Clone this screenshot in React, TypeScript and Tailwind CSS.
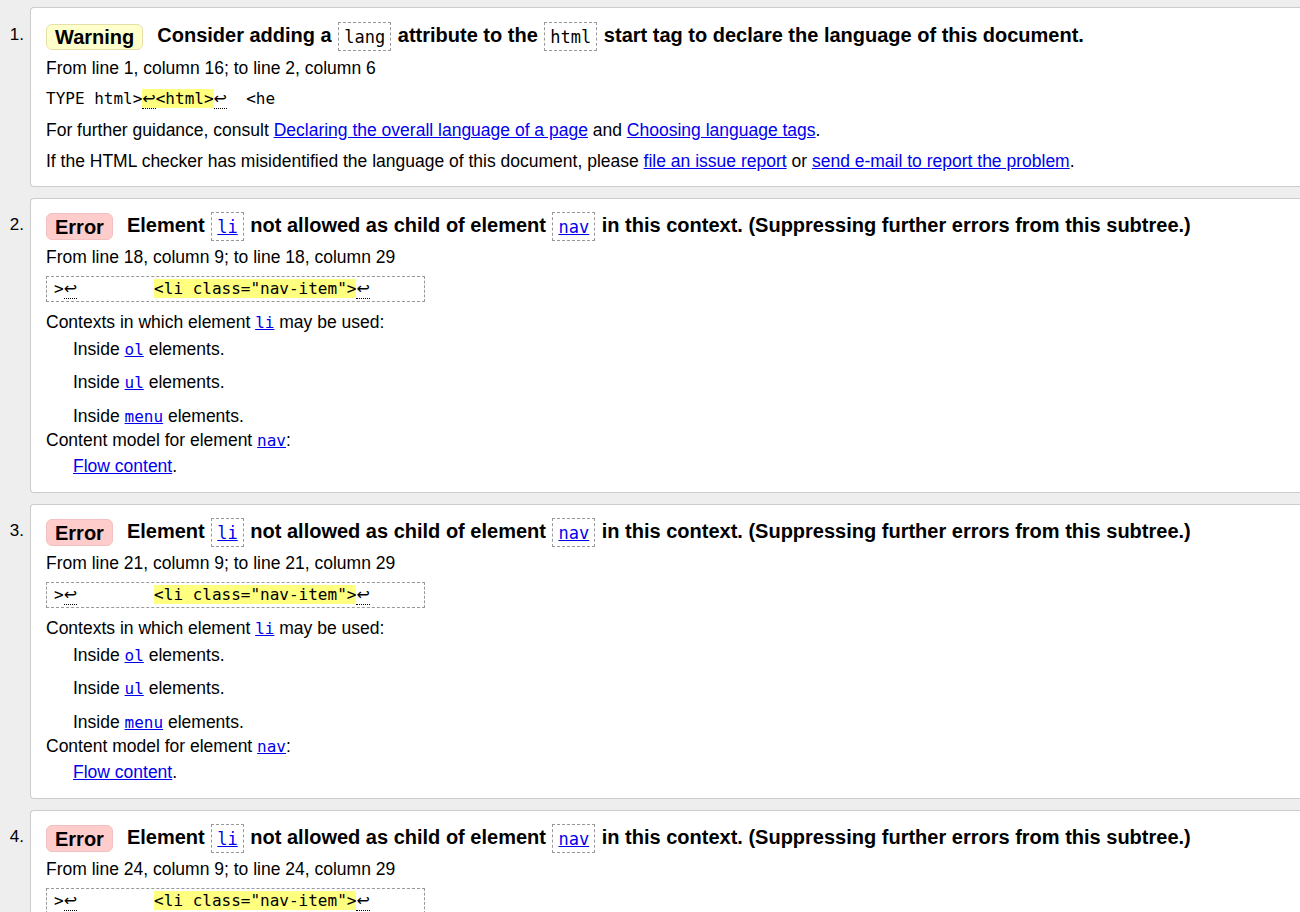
import React from "react";

type Kind = "warning" | "error";

const sans = "font-['Liberation_Sans',Arial,sans-serif]";
const mono = "font-['DejaVu_Sans_Mono','Liberation_Mono',monospace]";

/**
 * Inline code in a message title, with a dashed box round it.
 */
const TitleCode = ({ children, link }: { children: string; link?: boolean }) => (
  <span className="mx-[1px] inline-flex h-[29px] items-center border border-dashed border-[#999] px-[5px] align-middle">
    <code
      className={`${mono} text-[17px] font-normal ${
        link ? "text-[#0000ee] underline" : "text-black"
      }`}
    >
      {children}
    </code>
  </span>
);

/**
 * Inline link to an element name, in body text.
 */
const CodeLink = ({ children }: { children: string }) => (
  <a href="#" className={`${mono} text-[16px] text-[#0000ee] underline`}>
    {children}
  </a>
);

const TextLink = ({ children }: { children: string }) => (
  <a href="#" className="text-[#0000ee] underline">
    {children}
  </a>
);

const Ret = () => (
  <span className="border-b border-dotted border-black font-['DejaVu_Sans',sans-serif] text-[16px]">
    ↩
  </span>
);

const Badge = ({ kind }: { kind: Kind }) =>
  kind === "warning" ? (
    <span className="mr-[14px] inline-flex h-[26px] items-center rounded-[6px] border border-[#e6e0a8] bg-[#ffffcc] px-[8px] align-middle">
      Warning
    </span>
  ) : (
    <span className="mr-[14px] inline-flex h-[27px] items-center rounded-[6px] border border-[#f2c0c0] bg-[#ffcccc] px-[8px] align-middle">
      Error
    </span>
  );

const NavError = ({ line }: { line: number }) => (
  <>
    <div className="mt-[8px] h-[20px] leading-[20px]">
      From line {line}, column 9; to line {line}, column 29
    </div>
    <div
      className={`${mono} mt-[9px] h-[26px] w-[379px] overflow-hidden whitespace-pre border border-dashed border-[#999] px-[7px] text-[16px] leading-[24px]`}
    >
      {">"}
      <Ret />
      {"        "}
      <span className="bg-[#ffff80]">{'<li class="nav-item">'}</span>
      <Ret />
    </div>
    <div className="mt-[10px] h-[20px] leading-[20px]">
      Contexts in which element <CodeLink>li</CodeLink> may be used:
    </div>
    <div className="ml-[27px] mt-[7px] h-[20px] leading-[20px]">
      Inside <CodeLink>ol</CodeLink> elements.
    </div>
    <div className="ml-[27px] mt-[13px] h-[20px] leading-[20px]">
      Inside <CodeLink>ul</CodeLink> elements.
    </div>
    <div className="ml-[27px] mt-[14px] h-[20px] leading-[20px]">
      Inside <CodeLink>menu</CodeLink> elements.
    </div>
    <div className="mt-[4px] h-[20px] leading-[20px]">
      Content model for element <CodeLink>nav</CodeLink>:
    </div>
    <div className="ml-[27px] mt-[6px] h-[20px] leading-[20px]">
      <TextLink>Flow content</TextLink>.
    </div>
  </>
);

const NavTitle = () => (
  <>
    Element <TitleCode link>li</TitleCode> not allowed as child of element{" "}
    <TitleCode link>nav</TitleCode> in this context. (Suppressing further
    errors from this subtree.)
  </>
);

const Message = ({
  n,
  kind,
  title,
  children,
}: {
  n: number;
  kind: Kind;
  title: React.ReactNode;
  children: React.ReactNode;
}) => (
  <li className="mb-[11px] flex">
    <div
      className={`w-[30px] shrink-0 pr-[6px] text-right text-[17px] leading-[28px] ${
        kind === "warning" ? "pt-[14px]" : "pt-[13px]"
      }`}
    >
      {n}.
    </div>
    <div
      className={`flex-1 rounded-l-[4px] border border-r-0 border-[#ccc] bg-white pl-[15px] text-[17.5px] ${
        kind === "warning" ? "pb-[15px] pt-[13px]" : "pb-[16px] pt-[12px]"
      }`}
    >
      <div className="h-[28px] whitespace-nowrap text-[20px] font-bold leading-[28px]">
        <Badge kind={kind} />
        {title}
      </div>
      {children}
    </div>
  </li>
);

export default function App() {
  return (
    <div className={`${sans} min-h-screen bg-[#eeeeee] pt-[7px] text-black`}>
      <ol>
        <Message
          n={1}
          kind="warning"
          title={
            <>
              Consider adding a <TitleCode>lang</TitleCode> attribute to the{" "}
              <TitleCode>html</TitleCode> start tag to declare the language of
              this document.
            </>
          }
        >
          <div className="mt-[9px] h-[20px] leading-[20px]">
            From line 1, column 16; to line 2, column 6
          </div>
          <div
            className={`${mono} mt-[11px] h-[20px] whitespace-pre text-[16px] leading-[20px]`}
          >
            {"TYPE html>"}
            <span className="bg-[#ffff80]">
              <Ret />
              {"<html>"}
            </span>
            <Ret />
            {"  <he"}
          </div>
          <div className="mt-[11px] h-[20px] leading-[20px]">
            For further guidance, consult{" "}
            <TextLink>Declaring the overall language of a page</TextLink> and{" "}
            <TextLink>Choosing language tags</TextLink>.
          </div>
          <div className="mt-[11px] h-[20px] leading-[20px]">
            If the HTML checker has misidentified the language of this document,
            please <TextLink>file an issue report</TextLink> or{" "}
            <TextLink>send e-mail to report the problem</TextLink>.
          </div>
        </Message>
        {[18, 21, 24].map((line, i) => (
          <Message key={line} n={i + 2} kind="error" title={<NavTitle />}>
            <NavError line={line} />
          </Message>
        ))}
      </ol>
    </div>
  );
}
